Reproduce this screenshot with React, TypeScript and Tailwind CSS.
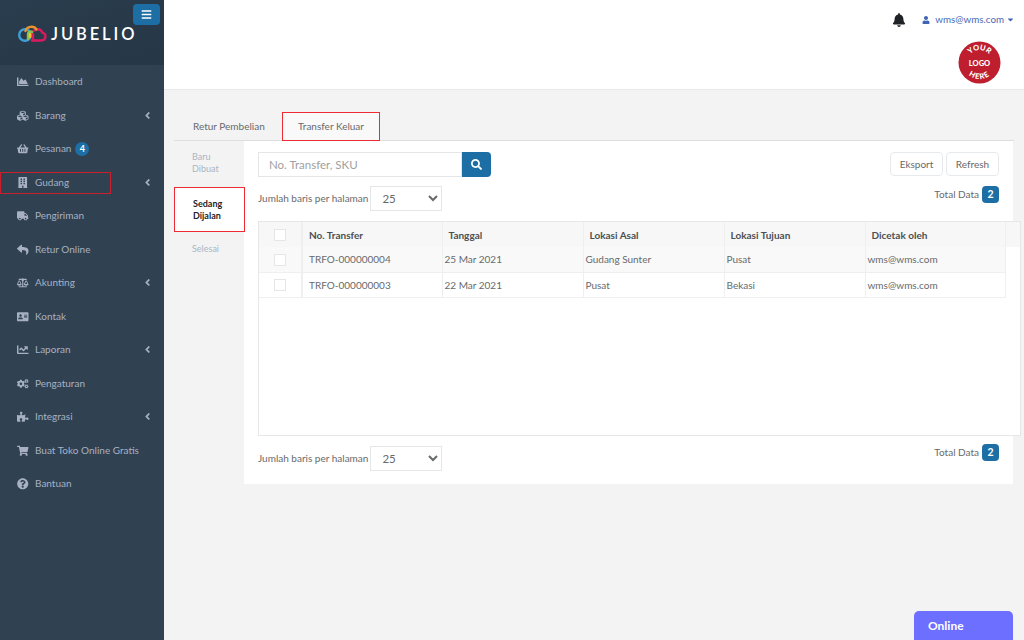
import {
  FaAddressCard,
  FaAngleLeft,
  FaBalanceScale,
  FaBars,
  FaBell,
  FaBuilding,
  FaCaretDown,
  FaChartArea,
  FaChartLine,
  FaCogs,
  FaCubes,
  FaPuzzlePiece,
  FaQuestionCircle,
  FaReply,
  FaSearch,
  FaShoppingBasket,
  FaShoppingCart,
  FaTruck,
  FaUser,
} from "react-icons/fa";

const menu = [
  { label: "Dashboard", icon: FaChartArea },
  { label: "Barang", icon: FaCubes, arrow: true },
  { label: "Pesanan", icon: FaShoppingBasket, badge: "4" },
  { label: "Gudang", icon: FaBuilding, arrow: true, marked: true },
  { label: "Pengiriman", icon: FaTruck },
  { label: "Retur Online", icon: FaReply },
  { label: "Akunting", icon: FaBalanceScale, arrow: true },
  { label: "Kontak", icon: FaAddressCard },
  { label: "Laporan", icon: FaChartLine, arrow: true },
  { label: "Pengaturan", icon: FaCogs },
  { label: "Integrasi", icon: FaPuzzlePiece, arrow: true },
  { label: "Buat Toko Online Gratis", icon: FaShoppingCart },
  { label: "Bantuan", icon: FaQuestionCircle },
];

const rows = [
  { no: "TRFO-000000004", date: "25 Mar 2021", from: "Gudang Sunter", to: "Pusat", by: "wms@wms.com" },
  { no: "TRFO-000000003", date: "22 Mar 2021", from: "Pusat", to: "Bekasi", by: "wms@wms.com" },
];

function Logo() {
  return (
    <div className="flex items-center gap-[4px]">
      <svg width="29" height="18" viewBox="0 0 29 18" fill="none" strokeWidth="2.4" strokeLinecap="round">
        <path d="M14 15.5H23.5a4 4 0 0 0 .8-7.9A5.2 5.2 0 0 0 15.5 6" stroke="#d81b60" />
        <path d="M15 15.5V9" stroke="#d81b60" />
        <circle cx="7" cy="10" r="5.8" stroke="#3f9fd8" />
        <path d="M7.5 6A6 5.5 0 0 1 18.5 4.5" stroke="#e8932e" />
        <path d="M10 14V9a2.5 2.5 0 0 1 4-2" stroke="#8bc34a" />
        <path d="M12 12V9" stroke="#f2c230" />
      </svg>
      <span className="text-[16.5px] font-semibold tracking-[2.9px] text-white">JUBELIO</span>
    </div>
  );
}

function Sidebar() {
  return (
    <aside className="flex w-[164px] shrink-0 flex-col bg-[#304152]">
      <div className="relative flex h-[65px] items-center bg-gradient-to-br from-[#2a3d4e] to-[#263746] pl-[18px] pt-[3px]">
        <Logo />
        <button className="absolute right-[4px] top-[4px] flex h-[21px] w-[27px] items-center justify-center rounded-sm bg-[#1c6ea4] text-[11px] text-white">
          <FaBars />
        </button>
      </div>
      <nav className="flex flex-col">
        {menu.map((item) => (
          <div key={item.label} className="relative flex h-[33.5px] items-center whitespace-nowrap pl-[17px] pr-[11px] text-[10px] text-[#a7b1c2]">
            <span className="flex w-[18px] shrink-0 text-[11.5px]">
              <item.icon />
            </span>
            <span>{item.label}</span>
            {item.badge && (
              <span className="ml-[4px] flex h-[14px] w-[14px] items-center justify-center rounded-full bg-[#1c6ea4] text-[9px] font-bold text-white">
                {item.badge}
              </span>
            )}
            {item.arrow && <FaAngleLeft className="ml-auto text-[11px]" />}
            {item.marked && <div className="absolute left-0 top-[6px] h-[22px] w-[111px] border-[1.5px] border-[#c9202c]" />}
          </div>
        ))}
      </nav>
    </aside>
  );
}

function YourLogo() {
  return (
    <svg width="43" height="43" viewBox="0 0 43 43">
      <circle cx="21.5" cy="21.5" r="21" fill="#be1e2d" />
      <defs>
        <path id="logo-top" d="M9 21.5a12.5 12.5 0 0 1 25 0" />
        <path id="logo-bottom" d="M5 21.5a16.5 16.5 0 0 0 33 0" />
      </defs>
      <g fill="#fff" fontSize="7.5" fontWeight="900" fontFamily="Lato, sans-serif" textAnchor="middle">
        <text>
          <textPath href="#logo-top" startOffset="50%">YOUR</textPath>
        </text>
        <text x="21.5" y="24.5" fontSize="7.5">LOGO</text>
        <text letterSpacing="1">
          <textPath href="#logo-bottom" startOffset="50%">HERE</textPath>
        </text>
      </g>
    </svg>
  );
}

function Header() {
  return (
    <header className="flex h-[90px] shrink-0 flex-col items-end border-b border-[#e7eaec] bg-white pr-[11px] pt-[12px]">
      <div className="flex h-[15px] items-center">
        <FaBell className="mr-[16px] text-[14px] text-[#1f2328]" />
        <FaUser className="mr-[5px] text-[8px] text-[#3f66b5]" />
        <span className="text-[9.8px] text-[#4a6bb5]">wms@wms.com</span>
        <FaCaretDown className="-mr-[2px] ml-[2px] text-[9px] text-[#3f66b5]" />
      </div>
      <div className="mr-[12px] mt-[14px]">
        <YourLogo />
      </div>
    </header>
  );
}

function PageSize() {
  return (
    <div className="flex items-center gap-[2px]">
      <span className="text-[10px] text-[#676a6c]">Jumlah baris per halaman</span>
      <select defaultValue="25" className="h-[25px] w-[72px] border border-[#e5e6e7] bg-white pl-[7px] text-[11.5px] text-[#676a6c]">
        <option>10</option>
        <option>25</option>
        <option>50</option>
      </select>
    </div>
  );
}

function TotalData() {
  return (
    <div className="flex items-center gap-[3px]">
      <span className="text-[10px] text-[#676a6c]">Total Data</span>
      <span className="flex h-[17px] w-[17px] items-center justify-center rounded-sm bg-[#1c6ea4] text-[10.5px] font-bold text-white">2</span>
    </div>
  );
}

function Check() {
  return <input type="checkbox" className="h-[12px] w-[12px] appearance-none border border-[#e5e6e7] bg-white align-middle" />;
}

function TransferTable() {
  const th = "border-r border-[#efefef] pl-[6px] pt-[1px] text-left font-bold text-[#4c4f53]";
  const td = "border-r border-b border-[#efefef] pl-[2px] pt-[1px] font-normal text-[#676a6c]";
  return (
    <div className="mt-[10px] h-[215px] w-[763px] border border-[#e7e7e7] bg-white">
      <table className="w-full table-fixed border-collapse text-[10px]">
        <thead>
          <tr className="h-[25px] bg-[#f7f7f7]">
            <th className="w-[43px] border-r-2 border-[#efefef] text-center"><Check /></th>
            <th className={`w-[140px] ${th}`}>No. Transfer</th>
            <th className={`w-[141px] ${th}`}>Tanggal</th>
            <th className={`w-[141px] ${th}`}>Lokasi Asal</th>
            <th className={`w-[141px] ${th}`}>Lokasi Tujuan</th>
            <th className={`w-[140px] ${th}`}>Dicetak oleh</th>
            <th />
          </tr>
        </thead>
        <tbody>
          {rows.map((row, i) => (
            <tr key={row.no} className={`h-[25px] ${i === 0 ? "bg-[#f9f9f9]" : "bg-white"}`}>
              <td className="border-r-2 border-b border-[#efefef] text-center"><Check /></td>
              <td className={`${td} pl-[6px] text-[#337ab7]`}>{row.no}</td>
              <td className={td}>{row.date}</td>
              <td className={td}>{row.from}</td>
              <td className={td}>{row.to}</td>
              <td className={td}>{row.by}</td>
              <td className="bg-white" />
            </tr>
          ))}
        </tbody>
      </table>
    </div>
  );
}

function Content() {
  return (
    <div className="px-[10px] pt-[18px]">
      <div className="flex h-[33px] items-end border-b border-[#dedede] text-[10px] text-[#676a6c]">
        <div className="-mb-px flex h-[29px] w-[108px] items-center pl-[19px]">Retur Pembelian</div>
        <div className="-mb-px flex h-[29px] w-[98px] items-center justify-center border-[1.5px] border-[#ee2a35] bg-[#f9f9f9]">Transfer Keluar</div>
      </div>
      <div className="flex">
        <div className="w-[70px] shrink-0 pt-[10px] text-[9px] leading-[12px] text-[#a9b5c4]">
          <div className="h-[36px] pl-[18px]">Baru<br />Dibuat</div>
          <div className="relative z-10 flex h-[45px] w-[71px] items-center border-[1.5px] border-[#ee2a35] bg-white pl-[18px] font-bold text-[#1f2328]">
            <span>Sedang<br />Dijalan</span>
          </div>
          <div className="pl-[18px] pt-[11px]">Selesai</div>
        </div>
        <section className="h-[343px] w-[769px] bg-white px-[14px] pt-[11px]">
          <div className="flex justify-between">
            <div className="flex h-[25px]">
              <input placeholder="No. Transfer, SKU" className="h-[25px] w-[204px] border border-[#e5e6e7] bg-white pl-[10px] text-[11.5px] placeholder:text-[#a0a0a0]" />
              <button className="flex h-[25px] w-[29px] items-center justify-center rounded-r-sm bg-[#1c6ea4] text-[11px] text-white">
                <FaSearch />
              </button>
            </div>
            <div className="flex gap-[3px]">
              <button className="h-[24px] w-[53px] rounded-sm border border-[#e7eaec] bg-white text-[10px] text-[#676a6c]">Eksport</button>
              <button className="h-[24px] w-[53px] rounded-sm border border-[#e7eaec] bg-white text-[10px] text-[#676a6c]">Refresh</button>
            </div>
          </div>
          <div className="mt-[9px] flex items-start justify-between">
            <PageSize />
            <TotalData />
          </div>
          <TransferTable />
          <div className="mt-[8px] flex items-start justify-between">
            <div className="pt-[2px]"><PageSize /></div>
            <TotalData />
          </div>
        </section>
      </div>
    </div>
  );
}

export default function App() {
  return (
    <div className="relative flex h-screen w-full overflow-hidden bg-[#f3f3f4] font-['Lato',sans-serif]">
      <Sidebar />
      <main className="min-w-0 flex-1">
        <Header />
        <Content />
      </main>
      <div className="absolute bottom-0 right-[11px] flex h-[29px] w-[99px] items-center rounded-t-[5px] bg-[#6c6fff] pl-[14px] text-[12px] font-bold text-white">
        Online
      </div>
    </div>
  );
}
